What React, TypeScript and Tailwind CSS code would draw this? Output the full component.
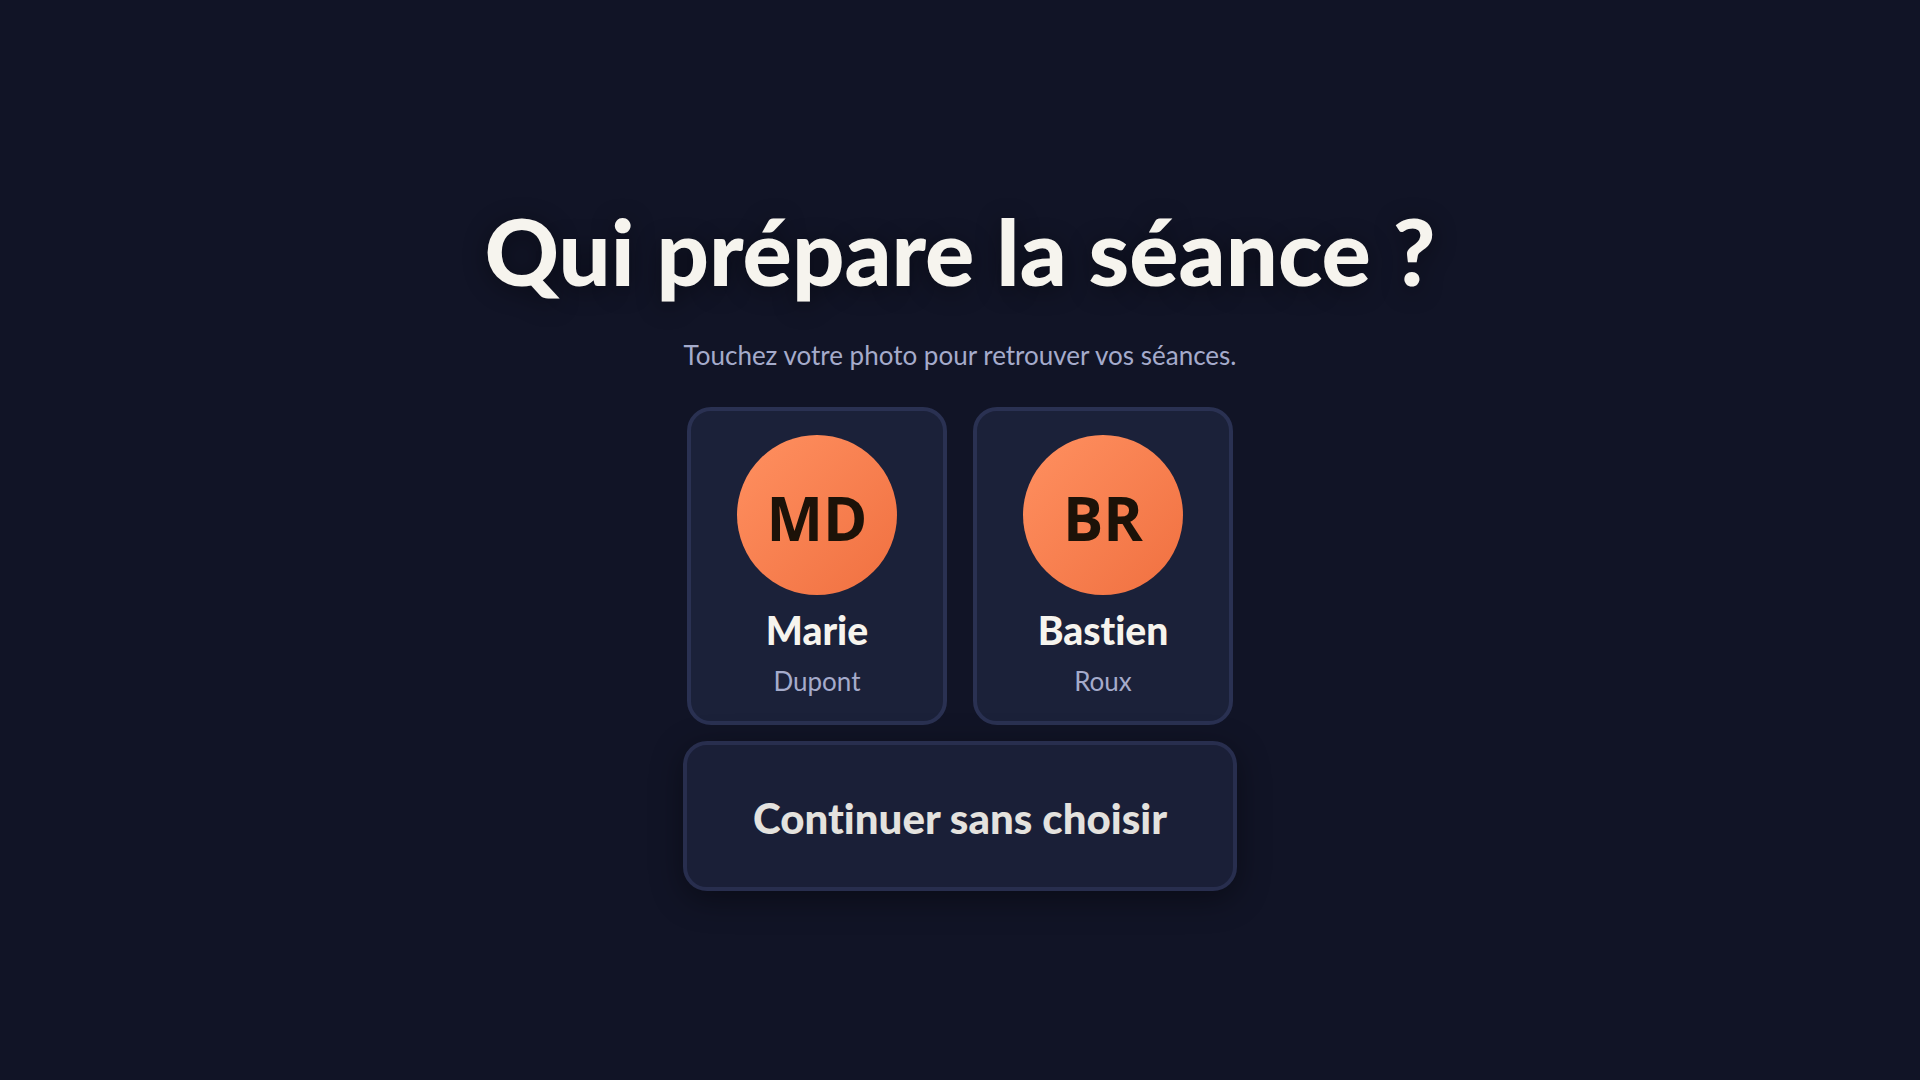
const PROFILES = [
  { initials: "MD", firstName: "Marie", lastName: "Dupont" },
  { initials: "BR", firstName: "Bastien", lastName: "Roux" },
];

type Profile = (typeof PROFILES)[number];

const ProfileCard = ({ profile }: { profile: Profile }) => {
  return (
    <button
      type="button"
      className="flex w-[260px] cursor-pointer flex-col items-center rounded-3xl border-4 border-[#2a3152] bg-[#1b2139] px-6 pt-6 pb-5"
    >
      <span className="flex h-40 w-40 items-center justify-center rounded-full bg-linear-135 from-[#ff9060] to-[#f07040] pt-1.5 font-['Open_Sans',sans-serif] text-[60px] leading-none font-bold text-[#1c1208]">
        {profile.initials}
      </span>
      <span className="mt-2.5 text-[39px] leading-[50px] font-black text-[#f6f4ee]">
        {profile.firstName}
      </span>
      <span className="mt-1.5 text-[26px] leading-[40px] text-[#a5abcb]">
        {profile.lastName}
      </span>
    </button>
  );
};

export default function App() {
  return (
    <main className="flex min-h-screen flex-col items-center justify-center bg-[#111426] px-6 font-['Lato',sans-serif] [font-variant-ligatures:none]">
      <h1 className="text-center text-[92px] leading-[124px] font-black text-[#f6f4ee] [text-shadow:0_4px_24px_rgba(0,0,0,0.45)]">
        Qui prépare la séance ?
      </h1>
      <p className="mt-[18px] text-center text-[26px] leading-[48px] text-[#a5abcb]">
        Touchez votre photo pour retrouver vos séances.
      </p>

      <div className="mt-7 flex flex-wrap justify-center gap-[26px]">
        {PROFILES.map((profile) => (
          <ProfileCard key={profile.initials} profile={profile} />
        ))}
      </div>

      <button
        type="button"
        className="mt-4 cursor-pointer rounded-3xl border-4 border-[#2a3152] bg-[#1b2039] px-[66px] pt-[46px] pb-[42px] text-[42px] leading-[54px] font-black text-[#f6f4ee] opacity-92 shadow-[0_8px_32px_rgba(0,0,0,0.4)]"
      >
        Continuer sans choisir
      </button>
    </main>
  );
}
